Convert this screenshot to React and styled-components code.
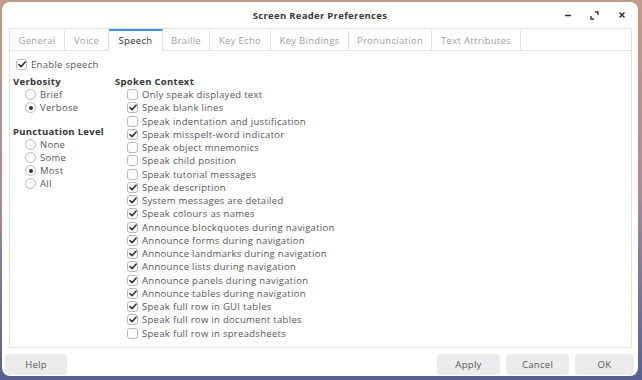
import React from "react";
import styled, { createGlobalStyle } from "styled-components";

const Global = createGlobalStyle`
  html, body { margin: 0; padding: 0; }
  body {
    width: 642px; height: 380px; overflow: hidden;
    background: linear-gradient(180deg, #c09a8a 0%, #a88e98 50%, #55608f 100%);
    font-family: "Open Sans", "Noto Sans", sans-serif;
  }
`;

const Win = styled.div`
  margin: 2px;
  width: 636px;
  height: 374px;
  box-sizing: border-box;
  background: #ffffff;
  border-radius: 8px;
  display: flex;
  flex-direction: column;
  overflow: hidden;
`;

const TitleBar = styled.div`
  height: 26px;
  display: grid;
  grid-template-columns: 1fr auto 1fr;
  align-items: center;
`;

const Title = styled.div`
  grid-column: 2;
  font-size: 9.5px;
  font-weight: 700;
  color: #3a3a3a;
  letter-spacing: 0.3px;
`;

const Controls = styled.div`
  grid-column: 3;
  justify-self: end;
  display: flex;
  align-items: center;
  margin-right: 3px;
`;

const Ctl = styled.div`
  width: 27px;
  height: 20px;
  display: flex;
  align-items: center;
  justify-content: center;
`;

const Notebook = styled.div`
  margin: 0 6px 0 7px;
  display: flex;
  flex-direction: column;
  height: 320px;
  box-sizing: border-box;
`;

const TabRow = styled.div`
  display: flex;
  height: 23px;
  box-sizing: border-box;
  border: 1px solid #e2e2e2;
  border-bottom: none;
`;

const Tab = styled.div`
  width: ${(p) => p.w}px;
  box-sizing: border-box;
  display: flex;
  align-items: center;
  justify-content: center;
  font-size: 9.5px;
  color: ${(p) => (p.active ? "#333" : "#a0a0a0")};
  border-right: 1px solid #e2e2e2;
  border-top: 2px solid ${(p) => (p.active ? "#3d93d6" : "transparent")};
  border-bottom: 1px solid ${(p) => (p.active ? "transparent" : "#e2e2e2")};
  letter-spacing: 0.3px;
  padding-bottom: 1px;
`;

const TabFill = styled.div`
  flex: 1;
  border-bottom: 1px solid #e2e2e2;
`;

const Page = styled.div`
  flex: 1;
  border: 1px solid #e2e2e2;
  border-top: none;
  padding: 6px 0 0 3px;
  color: #555;
  font-size: 9.5px;
  letter-spacing: 0.3px;
`;

const Row = styled.div`
  display: flex;
  align-items: center;
  height: ${(p) => p.h || 13.25}px;
  gap: 4px;
  padding-left: ${(p) => p.indent || 0}px;
`;

const Box = styled.div`
  width: 11px;
  height: 11px;
  box-sizing: border-box;
  border: 1px solid #b8b8b8;
  border-radius: 3px;
  background: #fff;
  display: flex;
  align-items: center;
  justify-content: center;
  flex: none;
`;

const Radio = styled(Box)`
  border-radius: 50%;
`;

const Dot = styled.div`
  width: 4px;
  height: 4px;
  border-radius: 50%;
  background: #333;
`;

const Columns = styled.div`
  display: flex;
  margin-top: 4px;
`;

const Left = styled.div`
  width: 102px;
  display: flex;
  flex-direction: column;
`;

const Right = styled.div`
  display: flex;
  flex-direction: column;
`;

const Heading = styled.div`
  font-weight: 700;
  color: #333;
  height: 13px;
  display: flex;
  align-items: center;
  margin-top: ${(p) => p.mt || 0}px;
`;

const Footer = styled.div`
  display: flex;
  align-items: center;
  padding: 6px 4px 0 3px;
  gap: 6px;
`;

const Button = styled.div`
  width: ${(p) => p.w}px;
  height: 21px;
  border-radius: 4px;
  background: #ececec;
  color: #555;
  font-size: 9.5px;
  letter-spacing: 0.3px;
  display: flex;
  align-items: center;
  justify-content: center;
  margin-left: ${(p) => (p.push ? "auto" : "0")};
`;

const Check = () => (
  <svg width="8" height="7" viewBox="0 0 8 7">
    <path d="M1 3.6 L3.1 5.6 L7 1.2" fill="none" stroke="#333" strokeWidth="1.6" strokeLinecap="round" strokeLinejoin="round" />
  </svg>
);

const CheckRow = ({ on, children, indent, h }) => (
  <Row indent={indent} h={h}>
    <Box>{on && <Check />}</Box>
    <span>{children}</span>
  </Row>
);

const RadioRow = ({ on, children }) => (
  <Row indent={12}>
    <Radio>{on && <Dot />}</Radio>
    <span>{children}</span>
  </Row>
);

const tabs = [
  ["General", 55],
  ["Voice", 44],
  ["Speech", 54, true],
  ["Braille", 47],
  ["Key Echo", 61],
  ["Key Bindings", 78],
  ["Pronunciation", 83],
  ["Text Attributes", 89],
];

const items = [
  ["Only speak displayed text", false],
  ["Speak blank lines", true],
  ["Speak indentation and justification", false],
  ["Speak misspelt-word indicator", true],
  ["Speak object mnemonics", false],
  ["Speak child position", false],
  ["Speak tutorial messages", false],
  ["Speak description", true],
  ["System messages are detailed", true],
  ["Speak colours as names", true],
  ["Announce blockquotes during navigation", true],
  ["Announce forms during navigation", true],
  ["Announce landmarks during navigation", true],
  ["Announce lists during navigation", true],
  ["Announce panels during navigation", true],
  ["Announce tables during navigation", true],
  ["Speak full row in GUI tables", true],
  ["Speak full row in document tables", true],
  ["Speak full row in spreadsheets", false],
];

export default function App() {
  return (
    <>
      <Global />
      <Win>
        <TitleBar>
          <Title>Screen Reader Preferences</Title>
          <Controls>
            <Ctl>
              <svg width="8" height="8" viewBox="0 0 8 8">
                <path d="M1 4.5 H7" stroke="#333" strokeWidth="1.4" />
              </svg>
            </Ctl>
            <Ctl>
              <svg width="9" height="9" viewBox="0 0 9 9">
                <path d="M5 1 H8 V4 M1 5 V8 H4" fill="none" stroke="#333" strokeWidth="1.4" />
              </svg>
            </Ctl>
            <Ctl>
              <svg width="8" height="8" viewBox="0 0 8 8">
                <path d="M1.5 1.5 L6.5 6.5 M6.5 1.5 L1.5 6.5" stroke="#333" strokeWidth="1.5" />
              </svg>
            </Ctl>
          </Controls>
        </TitleBar>
        <Notebook>
          <TabRow>
            {tabs.map(([t, w, a]) => (
              <Tab key={t} w={w} active={a}>{t}</Tab>
            ))}
            <TabFill />
          </TabRow>
          <Page>
            <CheckRow on indent={3} h={14}>Enable speech</CheckRow>
            <Columns>
              <Left>
                <Heading>Verbosity</Heading>
                <RadioRow>Brief</RadioRow>
                <RadioRow on>Verbose</RadioRow>
                <Heading mt={10}>Punctuation Level</Heading>
                <RadioRow>None</RadioRow>
                <RadioRow>Some</RadioRow>
                <RadioRow on>Most</RadioRow>
                <RadioRow>All</RadioRow>
              </Left>
              <Right>
                <Heading>Spoken Context</Heading>
                {items.map(([t, on]) => (
                  <CheckRow key={t} on={on} indent={12}>{t}</CheckRow>
                ))}
              </Right>
            </Columns>
          </Page>
        </Notebook>
        <Footer>
          <Button w={62}>Help</Button>
          <Button w={63} push>Apply</Button>
          <Button w={63}>Cancel</Button>
          <Button w={59}>OK</Button>
        </Footer>
      </Win>
    </>
  );
}
